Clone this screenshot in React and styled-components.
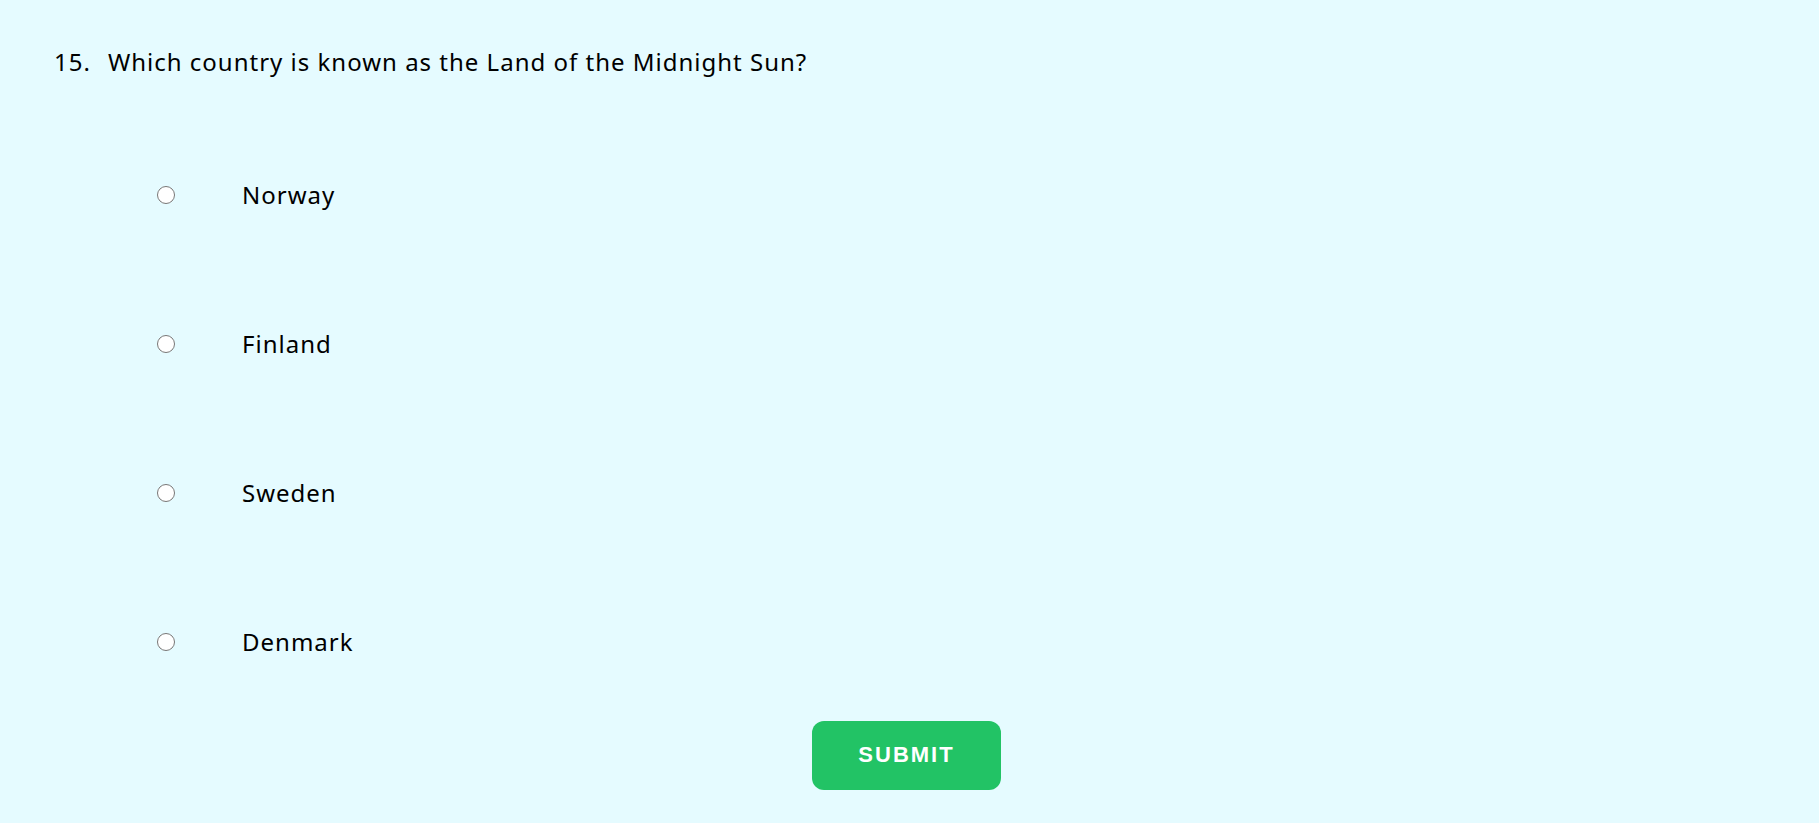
import React, { useState } from "react";
import styled, { createGlobalStyle } from "styled-components";

const GlobalStyle = createGlobalStyle`
  body {
    margin: 0;
    background: #e5fbff;
    color: #000;
    font-family: "Noto Sans", sans-serif;
  }
`;

const Form = styled.form`
  display: flex;
  flex-direction: column;
  padding: 44px 60px 32px 54px;
`;

const Options = styled.fieldset`
  border: 0;
  margin: 0;
  padding: 0;
  min-width: 0;
`;

const Question = styled.legend`
  display: flex;
  gap: 17px;
  padding: 0;
  font-size: 24px;
  line-height: 36px;
  letter-spacing: 1px;
`;

const List = styled.div`
  display: grid;
  gap: 113px;
  padding: 97px 0 0 103px;
`;

const Option = styled.label`
  display: flex;
  align-items: center;
  gap: 67px;
  font-size: 24px;
  line-height: 36px;
  letter-spacing: 1px;
`;

const Radio = styled.input`
  width: 18px;
  height: 18px;
  margin: 0;
`;

const Submit = styled.button`
  align-self: center;
  margin-top: 61px;
  padding: 21px 46px 23px;
  border: 0;
  border-radius: 12px;
  background: #22c365;
  color: #fff;
  font: bold 22px/25px "Liberation Sans", Arial, sans-serif;
  letter-spacing: 2px;
`;

const countries = ["Norway", "Finland", "Sweden", "Denmark"];

export default function App() {
  const [answer, setAnswer] = useState("");
  return (
    <>
      <GlobalStyle />
      <Form onSubmit={(e) => e.preventDefault()}>
        <Options>
          <Question>
            <span>15.</span>
            <span>Which country is known as the Land of the Midnight Sun?</span>
          </Question>
          <List>
            {countries.map((country) => (
              <Option key={country}>
                <Radio
                  type="radio"
                  name="country"
                  value={country}
                  checked={answer === country}
                  onChange={() => setAnswer(country)}
                />
                {country}
              </Option>
            ))}
          </List>
        </Options>
        <Submit type="submit">SUBMIT</Submit>
      </Form>
    </>
  );
}
